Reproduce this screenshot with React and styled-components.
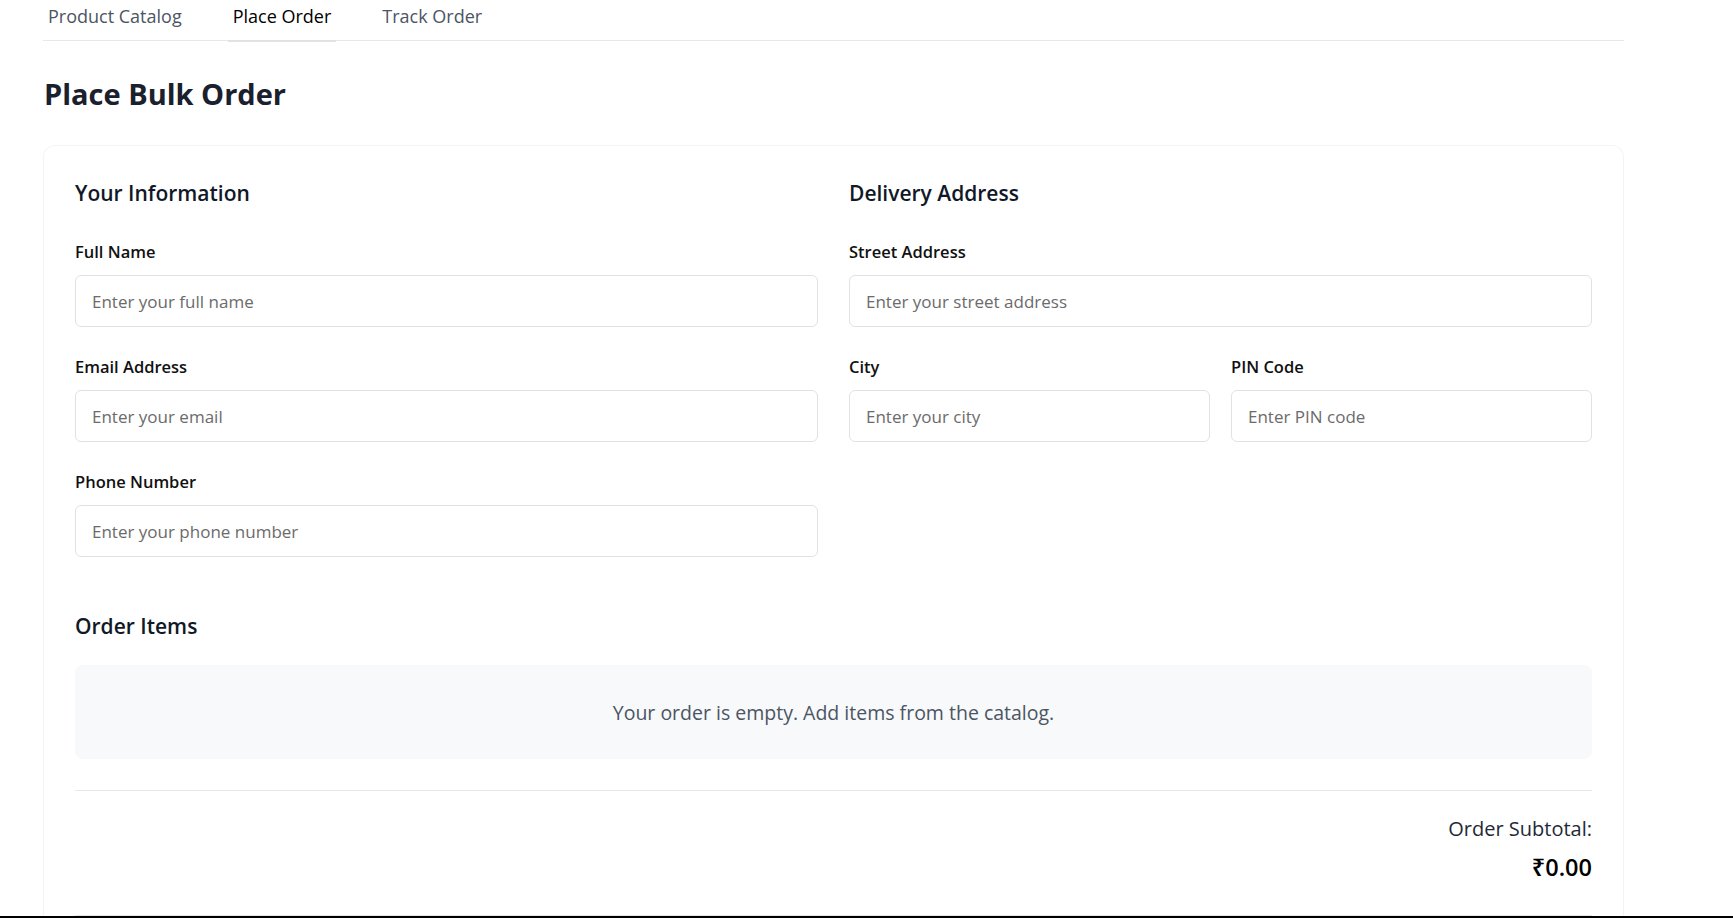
import React from 'react';
import styled, { createGlobalStyle } from 'styled-components';

const GlobalStyle = createGlobalStyle`
  * { box-sizing: border-box; }
  body {
    margin: 0;
    background: #ffffff;
    font-family: "Open Sans", "Noto Sans", sans-serif;
    color: #111827;
  }
`;

const Page = styled.div`
  width: 1581px;
  margin-left: 43px;
`;

const TabBar = styled.nav`
  display: flex;
  gap: 41px;
  height: 41px;
  border-bottom: 1px solid #e5e7eb;
`;

const Tab = styled.button`
  display: block;
  height: 42px;
  padding: 4px 5px 12px;
  border: none;
  border-bottom: 2px solid ${p => (p.$active ? '#e2e2e2' : 'transparent')};
  background: none;
  font-family: inherit;
  font-size: 18px;
  font-weight: 500;
  line-height: 24px;
  color: ${p => (p.$active ? '#000000' : '#4b5563')};
  align-self: flex-start;
  cursor: pointer;
`;

const Title = styled.h1`
  margin: 33px 0 0 1px;
  font-size: 29px;
  font-weight: 700;
  line-height: 40px;
  color: #1a202c;
`;

const Card = styled.section`
  margin-top: 31px;
  padding: 31px 31px 0;
  border: 1px solid #f4f4f4;
  border-bottom: none;
  border-radius: 12px 12px 0 0;
  background: #fff;
`;

const Columns = styled.div`
  display: grid;
  grid-template-columns: 1fr 1fr;
  column-gap: 31px;
  margin-bottom: 53px;
`;

const SectionTitle = styled.h2`
  margin: 0 0 ${p => p.$gap ?? 30}px;
  font-size: 21px;
  font-weight: 600;
  line-height: 33px;
  color: #111827;
`;

const Field = styled.div`
  margin-bottom: ${p => (p.$last ? 0 : 28)}px;
`;

const Label = styled.label`
  display: block;
  margin-bottom: 11px;
  font-size: 16.5px;
  font-weight: 600;
  line-height: 24px;
  color: #111111;
`;

const Input = styled.input`
  display: block;
  width: 100%;
  height: 52px;
  padding: 0 16px;
  border: 1px solid #e2e2e2;
  border-radius: 6px;
  font-family: inherit;
  font-size: 17px;
  color: #111827;
  outline: none;
  &::placeholder { color: #6b6b6b; }
`;

const SplitRow = styled.div`
  display: grid;
  grid-template-columns: 1fr 1fr;
  column-gap: 21px;
`;

const EmptyBox = styled.div`
  display: flex;
  align-items: center;
  justify-content: center;
  height: 94px;
  margin-top: 22px;
  border-radius: 8px;
  background: #f8f9fa;
  font-size: 19.5px;
  color: #4b5563;
`;

const Divider = styled.hr`
  margin: ${p => p.$top}px 0 0;
  border: none;
  border-top: 1px solid #e5e7eb;
`;

const Totals = styled.div`
  display: flex;
  flex-direction: column;
  align-items: flex-end;
  padding-top: 23px;
`;

const TotalLabel = styled.div`
  font-size: 20px;
  font-weight: 500;
  line-height: 30px;
  color: #1f2937;
`;

const TotalValue = styled.div`
  margin-top: 5px;
  font-size: 23.5px;
  font-weight: 600;
  line-height: 36px;
  color: #000000;
`;

const BottomEdge = styled.div`
  position: fixed;
  left: 0;
  right: 0;
  bottom: 0;
  height: 2px;
  background: #000;
`;

export default function App() {
  return (
    <>
      <GlobalStyle />
      <Page>
        <TabBar>
          <Tab>Product Catalog</Tab>
          <Tab $active>Place Order</Tab>
          <Tab>Track Order</Tab>
        </TabBar>
        <Title>Place Bulk Order</Title>
        <Card>
          <Columns>
            <div>
              <SectionTitle>Your Information</SectionTitle>
              <Field>
                <Label>Full Name</Label>
                <Input placeholder="Enter your full name" />
              </Field>
              <Field>
                <Label>Email Address</Label>
                <Input placeholder="Enter your email" />
              </Field>
              <Field $last>
                <Label>Phone Number</Label>
                <Input placeholder="Enter your phone number" />
              </Field>
            </div>
            <div>
              <SectionTitle>Delivery Address</SectionTitle>
              <Field>
                <Label>Street Address</Label>
                <Input placeholder="Enter your street address" />
              </Field>
              <SplitRow>
                <Field>
                  <Label>City</Label>
                  <Input placeholder="Enter your city" />
                </Field>
                <Field>
                  <Label>PIN Code</Label>
                  <Input placeholder="Enter PIN code" />
                </Field>
              </SplitRow>
            </div>
          </Columns>
          <SectionTitle $gap={0}>Order Items</SectionTitle>
          <EmptyBox>Your order is empty. Add items from the catalog.</EmptyBox>
          <Divider $top={31} />
          <Totals>
            <TotalLabel>Order Subtotal:</TotalLabel>
            <TotalValue>₹0.00</TotalValue>
          </Totals>
          <Divider $top={30} />
        </Card>
      </Page>
      <BottomEdge />
    </>
  );
}
